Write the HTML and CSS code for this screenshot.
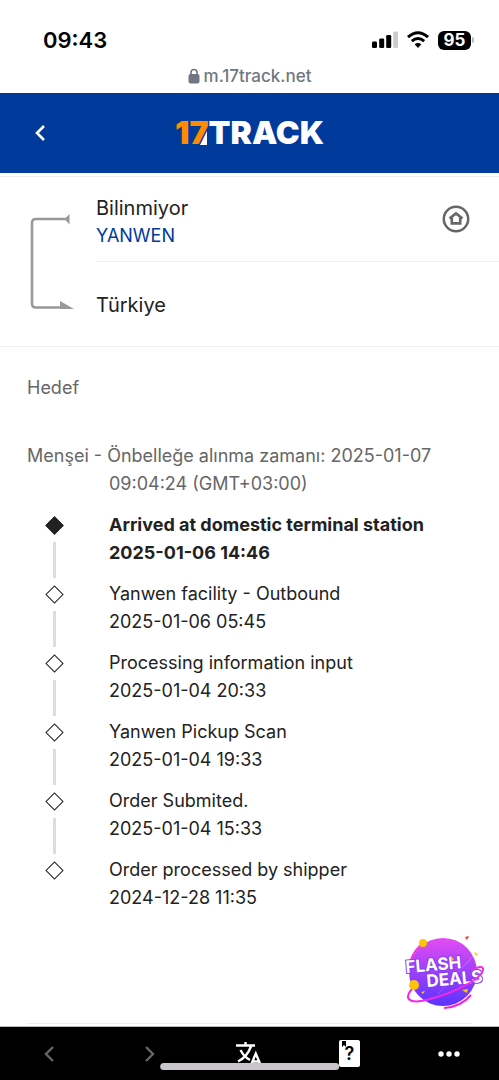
FILE: index.html
```html
<!DOCTYPE html>
<html lang="tr">
<head>
<meta charset="utf-8">
<meta name="viewport" content="width=device-width, initial-scale=1">
<title>17TRACK</title>
<link rel="stylesheet" href="styles.css">
</head>
<body>
<div class="page">
  <div class="status">
    <time class="clock">09:43</time>
    <div class="status-icons">
      <svg width="26" height="18" viewBox="0 0 26 18" aria-hidden="true">
        <rect x="0" y="10.500" width="5" height="6.500" rx="1.300"/>
        <rect x="7.200" y="7.500" width="5" height="9.500" rx="1.300"/>
        <rect x="14.200" y="4" width="5" height="13" rx="1.300"/>
        <rect x="21.200" y="0.500" width="4.800" height="16.500" rx="1.300" fill="#ccc"/>
      </svg>
      <svg width="22" height="18" viewBox="0 0 22 18" aria-hidden="true" fill="none" stroke="#000" stroke-width="3">
        <path d="M1 6.200Q11-2.600 21 6.200"/>
        <path d="M4.800 10.200Q11 4.800 17.200 10.200"/>
        <path d="M11 17L7.600 13.300Q11 10.600 14.400 13.300Z" fill="#000" stroke="none"/>
      </svg>
      <div class="battery"><span class="battery-level">95</span><span class="battery-tip"></span></div>
    </div>
  </div>
  <div class="address">
    <svg width="12" height="16" viewBox="0 0 12 16" aria-hidden="true">
      <rect x="0.500" y="6" width="11" height="9.500" rx="2" fill="#717780"/>
      <path d="M3 7V4.500a3 3 0 0 1 6 0V7" fill="none" stroke="#717780" stroke-width="1.600"/>
    </svg>
    <span>m.17track.net</span>
  </div>
  <header class="header">
    <button class="back" type="button" aria-label="Geri">
      <svg width="12" height="18" viewBox="0 0 12 18"><path d="M10 2L3 9L10 16" fill="none" stroke="#fff" stroke-width="2.600"/></svg>
    </button>
    <a class="logo" href="#" aria-label="17TRACK">
      <span class="logo-number">17</span><span class="logo-word">TRACK</span>
      <svg class="logo-slash" width="8" height="14" viewBox="0 0 8 14" aria-hidden="true"><path d="M7 0V14H0Z" fill="#fff"/></svg>
    </a>
  </header>
  <main class="content">
    <section class="route">
      <svg class="route-line" width="46" height="96" viewBox="0 0 46 96" aria-hidden="true">
        <path d="M37 5H6Q2 5 2 9V89.500Q2 93.500 6 93.500H33" fill="none" stroke="#999" stroke-width="2.600"/>
        <path d="M39.500 0V10.500L34.500 5Z" fill="#999"/>
        <path d="M30 87L44 95H30Z" fill="#999"/>
      </svg>
      <div class="stops">
        <div class="stop origin">
          <div class="origin-text">
            <div class="place">Bilinmiyor</div>
            <a class="carrier" href="#">YANWEN</a>
          </div>
          <svg width="28" height="28" viewBox="0 0 28 28" aria-hidden="true" fill="none" stroke="#666">
            <circle cx="14" cy="14" r="12.200" stroke-width="2.500"/>
            <path d="M7.500 13.600L14 8.500L20.500 13.600M9.800 12.500V18.400H18.200V12.500" stroke-width="2.600"/>
          </svg>
        </div>
        <div class="stop destination"><div class="place">Türkiye</div></div>
      </div>
    </section>
    <section class="history">
      <h2 class="label">Hedef</h2>
      <h2 class="label cached">Menşei - Önbelleğe alınma zamanı: 2025-01-07 09:04:24 (GMT+03:00)</h2>
      <ol class="events">
        <li class="event current"><span class="marker"><i class="diamond"></i></span><div>Arrived at domestic terminal station<br><time>2025-01-06 14:46</time></div></li>
        <li class="event"><span class="marker"><i class="diamond"></i></span><div>Yanwen facility - Outbound<br><time>2025-01-06 05:45</time></div></li>
        <li class="event"><span class="marker"><i class="diamond"></i></span><div>Processing information input<br><time>2025-01-04 20:33</time></div></li>
        <li class="event"><span class="marker"><i class="diamond"></i></span><div>Yanwen Pickup Scan<br><time>2025-01-04 19:33</time></div></li>
        <li class="event"><span class="marker"><i class="diamond"></i></span><div>Order Submited.<br><time>2025-01-04 15:33</time></div></li>
        <li class="event"><span class="marker"><i class="diamond"></i></span><div>Order processed by shipper<br><time>2024-12-28 11:35</time></div></li>
      </ol>
    </section>
  </main>
  <div class="bottom">
    <a class="promo" href="#" aria-label="Flash Deals">
      <svg width="90" height="80" viewBox="0 0 90 80">
        <defs>
          <linearGradient id="ball" x1="0" y1="0" x2="0" y2="1"><stop offset="0" stop-color="#e24cf3"/><stop offset="1" stop-color="#5a34ff"/></linearGradient>
        </defs>
        <circle cx="43" cy="40" r="34" fill="url(#ball)"/>
        <path d="M38 62L75 22" stroke="#fff" stroke-opacity="0.200"/>
        <path d="M10 30Q14 17 26 9" fill="none" stroke="#f733d8" stroke-width="2"/>
        <path d="M44 76Q61 75 71 63" fill="none" stroke="#f025e0" stroke-width="2"/>
        <g class="promo-text">
          <text x="6" y="41" transform="rotate(-5 6 41)">FLASH</text>
          <text x="27" y="55" transform="rotate(-5 27 55)">DEALS</text>
        </g>
        <path d="M15 54C1 67 9 73 30 67C57 60 82 46 83 38C84 33 77 35 72 38" fill="none" stroke="#f22be4" stroke-width="2"/>
        <circle cx="23" cy="11" r="4" fill="#ffc30a"/>
        <circle cx="14" cy="53" r="5" fill="#ffc30a"/>
        <path d="M65 5L69 4L67 8Z" fill="#f0343c"/>
        <path d="M74 20L78 22L76 24ZM51 25L54 27L51 30ZM21 60L25 59L23 62ZM62 58L68 57L67 61Z" fill="#ffc30a"/>
      </svg>
    </a>
    <hr class="rule">
    <nav class="toolbar" aria-label="Tarayıcı">
      <button class="tool" type="button" aria-label="Geri"><svg width="12" height="18" viewBox="0 0 12 18"><path d="M9 2L2 9L9 16" fill="none" stroke="#666" stroke-width="2.400"/></svg></button>
      <button class="tool" type="button" aria-label="İleri"><svg width="12" height="18" viewBox="0 0 12 18"><path d="M2 2L9 9L2 16" fill="none" stroke="#666" stroke-width="2.400"/></svg></button>
      <button class="tool" type="button" aria-label="Çevir"><svg width="28" height="26" viewBox="0 0 28 26" fill="none" stroke="#fff" stroke-width="2.400"><path d="M1 4.500H20M10.500 1V5M16 5.500Q12 16 3 20.500M5.500 9Q9 16 15 19"/><path d="M16 24L20.800 12.500L25.600 24M18 20.500H24" stroke-width="2.400"/></svg></button>
      <button class="tool" type="button" aria-label="Yardım"><span class="help"><svg class="bookmark" width="4" height="6" viewBox="0 0 4 6" aria-hidden="true"><path d="M0 0H4V6L2 4L0 6Z"/></svg>?</span></button>
      <button class="tool" type="button" aria-label="Daha fazla"><svg width="22" height="6" viewBox="0 0 22 6" fill="#fff"><circle cx="3" cy="3" r="2.700"/><circle cx="11" cy="3" r="2.700"/><circle cx="19" cy="3" r="2.700"/></svg></button>
      <span class="home-indicator"></span>
    </nav>
  </div>
</div>
</body>
</html>
```
FILE: styles.css
```css
* { box-sizing: border-box; }
body {
  margin: 0;
  background: #fff;
  color: #222;
  font-family: Inter, "Liberation Sans", sans-serif;
  font-size: 18px;
  line-height: 28px;
}
a { text-decoration: none; }
button { padding: 0; border: 0; background: none; font: inherit; }
svg { display: block; }

.page { display: flex; flex-direction: column; min-height: 100vh; }

.status {
  display: flex;
  align-items: center;
  justify-content: space-between;
  padding: 26px 25px 10px 43px;
  color: #000;
}
.clock { font-size: 22px; font-weight: 600; }
.status-icons { display: flex; align-items: center; gap: 9px; }
.battery { display: flex; align-items: center; gap: 1px; }
.battery-level {
  width: 33px;
  border-radius: 6px;
  background: #000;
  color: #fff;
  font-size: 17px;
  font-weight: 700;
  line-height: 19px;
  text-align: center;
}
.battery-tip { width: 2px; height: 6px; border-radius: 0 2px 2px 0; background: #bbb; }

.address {
  display: flex;
  align-items: center;
  justify-content: center;
  gap: 4px;
  padding-bottom: 5px;
  color: #717780;
  font-size: 17px;
  font-weight: 500;
  line-height: 24px;
}

.header {
  display: grid;
  grid-template-columns: 80px 1fr 80px;
  align-items: center;
  height: 80px;
  background: #003a9b;
}
.back { display: grid; place-items: center; height: 80px; }
.logo {
  position: relative;
  justify-self: center;
  display: flex;
  color: #fff;
  font-size: 32px;
  font-weight: 900;
  line-height: 40px;
}
.logo-number { color: #ff8c00; }
.logo-slash { position: absolute; left: 25px; bottom: 8px; }

.content { flex: 1; padding-top: 3px; }
.route {
  display: flex;
  align-items: center;
  gap: 20px;
  padding-left: 30px;
  border-top: 1px solid #eee;
  border-bottom: 1px solid #eee;
}
.stops { flex: 1; }
.stop { display: flex; align-items: center; justify-content: space-between; height: 85px; }
.origin { padding-right: 29px; border-bottom: 1px solid #eee; }
.origin-text { padding-top: 5px; }
.destination { height: 84px; padding-top: 2px; }
.place { font-size: 20px; }
.carrier { display: block; color: #003a9b; }

.history { padding: 27px; }
.label { margin: 0; color: #666; font-size: 18px; font-weight: 400; }
.cached { margin-top: 40px; padding: 0 20px 0 82px; text-indent: -82px; }
.events { margin: 13px 0 0; padding: 0; list-style: none; }
.event { display: flex; gap: 27px; min-height: 69px; }
.current { font-weight: 700; }
.marker { display: flex; flex-direction: column; align-items: center; gap: 10px; width: 55px; padding-top: 8px; }
.diamond { width: 13px; height: 13px; border: 1px solid #222; transform: rotate(45deg); }
.current .diamond { background: #222; }
.event:not(:last-child) .marker::after { content: ""; width: 3px; height: 36px; background: #ddd; }

.bottom { position: relative; }
.promo { position: absolute; right: 9px; bottom: 68px; }
.promo-text {
  fill: #fff;
  stroke: #8a3cf5;
  stroke-width: 2px;
  paint-order: stroke;
  font-size: 17px;
  font-weight: 700;
}
.rule { margin: 0 27px 2px; border: 0; border-top: 1px solid #eee; }
.toolbar {
  position: relative;
  display: grid;
  grid-template-columns: repeat(5, 1fr);
  height: 54px;
  border-top: 1px solid #bbb;
  background: #000;
}
.tool { display: grid; place-items: center; }
.help {
  position: relative;
  width: 21px;
  border-radius: 2px;
  background: #fff;
  color: #000;
  font-size: 18px;
  font-weight: 600;
  line-height: 27px;
}
.bookmark { position: absolute; left: 3px; top: 1px; }
.home-indicator {
  position: absolute;
  left: 50%;
  bottom: 10px;
  width: 36%;
  height: 7px;
  border-radius: 4px;
  background: #c8c6c8;
  transform: translateX(-50%);
}
```
